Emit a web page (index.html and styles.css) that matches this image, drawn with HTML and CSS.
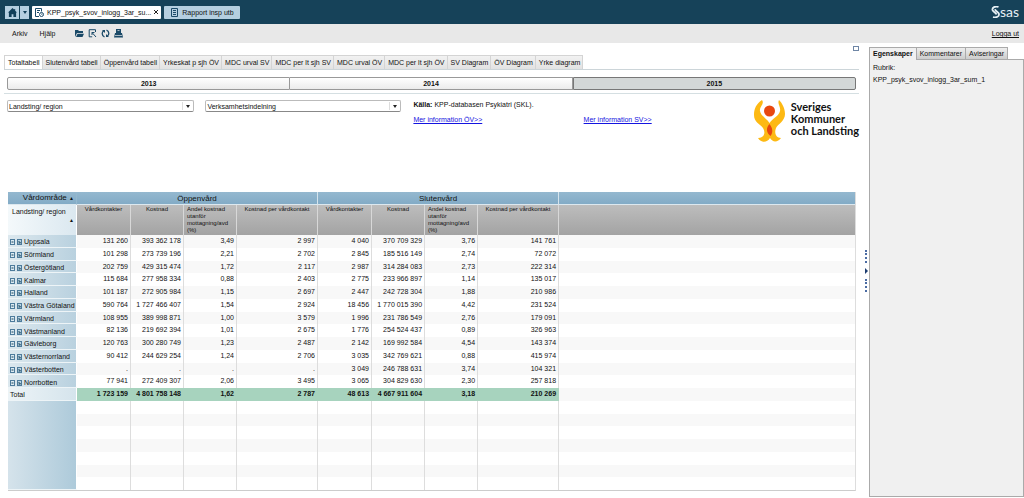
FILE: index.html
```html
<!DOCTYPE html>
<html lang="sv">

<head>
    <meta charset="UTF-8">
    <meta name="viewport" content="width=device-width, initial-scale=1.0">
    <link rel="stylesheet" href="styles.css">
    <title>KPP_psyk_svov_inlogg_3ar_sum_1</title>
</head>

<body>
    <svg class="symbols" aria-hidden="true">
        <symbol id="expand" viewBox="0 0 12 6">
            <rect x="0.5" y="0.5" width="4" height="5" fill="#dcebf3" stroke="#4d7b9b" />
            <path d="M1.5 3h2" stroke="#16425a" />
            <rect x="7.5" y="0.5" width="4" height="5" fill="#b9d3e2" stroke="#4d7b9b" />
            <path d="M8.5 2l2 2M8.5 4h2" stroke="#16425a" />
        </symbol>
    </svg>

    <header class="topbar">
        <div class="home-group">
            <button class="home" aria-label="Hem">
                <svg viewBox="0 0 10 10" width="9" height="9"><path d="M5 0L0 5h1v5h3V7h2v3h3V5h1L8 3V1H7v1z" fill="#123f59" /></svg>
            </button>
            <button class="home-menu" aria-label="Visa meny"><svg viewBox="0 0 4 3" width="4" height="3"><path d="M0 0h4L2 3z" fill="#123f59" /></svg></button>
        </div>
        <div class="doc-tab doc-active">
            <svg viewBox="0 0 9 9" width="9" height="9" fill="none" stroke="#1b4a68"><path d="M4 8.500H.5v-8h6v3M2 2.500h3M2 4.500h2" /><circle cx="6.500" cy="6.500" r="2" /><path d="M6.500 5.500v1h1" stroke-width=".6" /></svg>
            <a href="#">KPP_psyk_svov_inlogg_3ar_su...</a>
            <button class="close" aria-label="Stäng"><svg viewBox="0 0 4 4" width="4" height="4"><path d="M0 0l4 4M4 0L0 4" stroke="#222" /></svg></button>
        </div>
        <div class="doc-tab">
            <svg viewBox="0 0 9 9" width="9" height="9" fill="none" stroke="#1b4a68"><path d="M1.500.5h6v8h-6zM3 2.500h3M3 4.500h3M3 6.500h3" /></svg>
            <a href="#">Rapport insp utb</a>
        </div>
        <div class="sas">
            <svg viewBox="0 0 9 12" width="9" height="12" fill="none" stroke="#e6f0f5" stroke-width="1.800"><path d="M7.500 1C4-.2 1 1.500 1.500 4c.5 2 3.500 2.500 4 4.500M2 11c3.500 1 6.300-.5 6-3-.3-2-3.500-2.500-4-4.800" /></svg>
            <span>sas</span>
        </div>
    </header>

    <nav class="menubar">
        <a href="#">Arkiv</a>
        <a href="#">Hjälp</a>
        <div class="tools">
            <button aria-label="Öppna"><svg viewBox="0 0 9 9" width="9" height="9"><path d="M0 1h3l1 1h4v2H2L0 8zM2.500 4.700H9L7.500 8H1z" fill="#1b4a68" /></svg></button>
            <button aria-label="Redigera"><svg viewBox="0 0 9 9" width="9" height="9"><path d="M7.500 3V.7H1.200v7.100h3M4 3.500l4 4.500M4 6V3.500h2.500" fill="none" stroke="#1b4a68" /></svg></button>
            <button aria-label="Uppdatera"><svg viewBox="0 0 9 9" width="9" height="9"><path d="M3.500 8C.5 6.500.5 3 3 1.500M5.500 1c3 1.500 3 5 .5 6.500" fill="none" stroke="#1b4a68" stroke-width="1.300" /><path d="M1 1h3v3zM8 8H5V5z" fill="#1b4a68" /></svg></button>
            <button aria-label="Skriv ut"><svg viewBox="0 0 9 9" width="9" height="9"><path d="M2 0h5v4H2zM1 4h7l1 4.500H0z" fill="#1b4a68" /><path d="M3.500 1.500h2M1 6.500h7" stroke="#e8e8e8" stroke-width=".7" /></svg></button>
        </div>
        <a class="logout" href="#">Logga ut</a>
    </nav>

    <div class="workspace">
        <main class="report">
            <div class="report-top"><button class="maximize" aria-label="Maximera"></button></div>
            <nav class="tabs">
                <a class="active" href="#">Totaltabell</a>
                <a href="#">Slutenvård tabell</a>
                <a href="#">Öppenvård tabell</a>
                <a href="#">Yrkeskat p sjh ÖV</a>
                <a href="#">MDC urval SV</a>
                <a href="#">MDC per lt sjh SV</a>
                <a href="#">MDC urval ÖV</a>
                <a href="#">MDC per lt sjh ÖV</a>
                <a href="#">SV Diagram</a>
                <a href="#">ÖV Diagram</a>
                <a href="#">Yrke diagram</a>
            </nav>

            <div class="years">
                <button>2013</button>
                <button>2014</button>
                <button class="selected">2015</button>
            </div>

            <section class="filters">
                <div class="select">
                    <select aria-label="Landsting/ region"><option>Landsting/ region</option></select>
                </div>
                <div class="select select-wide">
                    <select aria-label="Verksamhetsindelning"><option>Verksamhetsindelning</option></select>
                </div>
                <div class="source">
                    <p><b>Källa:</b> KPP-databasen Psykiatri (SKL).</p>
                    <div class="links">
                        <a href="#">Mer information ÖV&gt;&gt;</a>
                        <a href="#">Mer information SV&gt;&gt;</a>
                    </div>
                </div>
                <div class="skl">
                    <svg viewBox="0 0 31 42" width="31" height="42">
                        <path d="M8 0C2 4 0 9 0 15c0 7 6 9 9 13 3 5 1 10-5 10 3 5 9 5 12 0 3 5 8 4 11 0-5 0-7-5-5-10 2-4 9-7 9-14 0-6-3-11-6-14-2 4 2 7 1 11-1 5-7 7-10.500 12C12 18 7 16 6 11 5 7 11 4 8 0z" fill="#fdb913" />
                        <circle cx="15.500" cy="11" r="5.500" fill="#e8480f" />
                        <path d="M15.500 24c-4 4-3 9 1 12 3-4 2-8-1-12z" fill="#e8480f" />
                    </svg>
                    <div>Sveriges<br>Kommuner<br>och Landsting</div>
                </div>
            </section>

            <table class="crosstab">
                <colgroup>
                    <col class="c-name">
                    <col class="c-first"><col class="c-num"><col class="c-num"><col class="c-wide">
                    <col class="c-first"><col class="c-num"><col class="c-num"><col class="c-wide">
                    <col>
                </colgroup>
                <thead>
                    <tr class="groups">
                        <th class="area">Vårdområde <span class="sort">▲</span></th>
                        <th colspan="4">Öppenvård</th>
                        <th colspan="4">Slutenvård</th>
                        <th></th>
                    </tr>
                    <tr class="measures">
                        <th class="region">Landsting/ region <span class="sort">▲</span></th>
                        <th>Vårdkontakter</th>
                        <th>Kostnad</th>
                        <th class="share">Andel kostnad utanför mottagning/avd (%)</th>
                        <th>Kostnad per vårdkontakt</th>
                        <th>Vårdkontakter</th>
                        <th>Kostnad</th>
                        <th class="share">Andel kostnad utanför mottagning/avd (%)</th>
                        <th>Kostnad per vårdkontakt</th>
                        <th></th>
                    </tr>
                </thead>
                <tbody>
                    <tr><th><svg class="expand"><use href="#expand" /></svg>Uppsala</th><td>131 260</td><td>393 362 178</td><td>3,49</td><td>2 997</td><td>4 040</td><td>370 709 329</td><td>3,76</td><td>141 761</td><td></td></tr>
                    <tr><th><svg class="expand"><use href="#expand" /></svg>Sörmland</th><td>101 298</td><td>273 739 196</td><td>2,21</td><td>2 702</td><td>2 845</td><td>185 516 149</td><td>2,74</td><td>72 072</td><td></td></tr>
                    <tr><th><svg class="expand"><use href="#expand" /></svg>Östergötland</th><td>202 759</td><td>429 315 474</td><td>1,72</td><td>2 117</td><td>2 987</td><td>314 284 083</td><td>2,73</td><td>222 314</td><td></td></tr>
                    <tr><th><svg class="expand"><use href="#expand" /></svg>Kalmar</th><td>115 684</td><td>277 958 334</td><td>0,88</td><td>2 403</td><td>2 775</td><td>233 966 897</td><td>1,14</td><td>135 017</td><td></td></tr>
                    <tr><th><svg class="expand"><use href="#expand" /></svg>Halland</th><td>101 187</td><td>272 905 984</td><td>1,15</td><td>2 697</td><td>2 447</td><td>242 728 304</td><td>1,88</td><td>210 986</td><td></td></tr>
                    <tr><th><svg class="expand"><use href="#expand" /></svg>Västra Götaland</th><td>590 764</td><td>1 727 466 407</td><td>1,54</td><td>2 924</td><td>18 456</td><td>1 770 015 390</td><td>4,42</td><td>231 524</td><td></td></tr>
                    <tr><th><svg class="expand"><use href="#expand" /></svg>Värmland</th><td>108 955</td><td>389 998 871</td><td>1,00</td><td>3 579</td><td>1 996</td><td>231 786 549</td><td>2,76</td><td>179 091</td><td></td></tr>
                    <tr><th><svg class="expand"><use href="#expand" /></svg>Västmanland</th><td>82 136</td><td>219 692 394</td><td>1,01</td><td>2 675</td><td>1 776</td><td>254 524 437</td><td>0,89</td><td>326 963</td><td></td></tr>
                    <tr><th><svg class="expand"><use href="#expand" /></svg>Gävleborg</th><td>120 763</td><td>300 280 749</td><td>1,23</td><td>2 487</td><td>2 142</td><td>169 992 584</td><td>4,54</td><td>143 374</td><td></td></tr>
                    <tr><th><svg class="expand"><use href="#expand" /></svg>Västernorrland</th><td>90 412</td><td>244 629 254</td><td>1,24</td><td>2 706</td><td>3 035</td><td>342 769 621</td><td>0,88</td><td>415 974</td><td></td></tr>
                    <tr><th><svg class="expand"><use href="#expand" /></svg>Västerbotten</th><td>.</td><td>.</td><td>.</td><td>.</td><td>3 049</td><td>246 788 631</td><td>3,74</td><td>104 321</td><td></td></tr>
                    <tr><th><svg class="expand"><use href="#expand" /></svg>Norrbotten</th><td>77 941</td><td>272 409 307</td><td>2,06</td><td>3 495</td><td>3 065</td><td>304 829 630</td><td>2,30</td><td>257 818</td><td></td></tr>
                    <tr class="total"><th>Total</th><td>1 723 159</td><td>4 801 758 148</td><td>1,62</td><td>2 787</td><td>48 613</td><td>4 667 911 604</td><td>3,18</td><td>210 269</td><td></td></tr>
                    <tr class="empty"><th rowspan="7"></th><td></td><td></td><td></td><td></td><td></td><td></td><td></td><td></td><td></td></tr>
                    <tr class="empty"><td></td><td></td><td></td><td></td><td></td><td></td><td></td><td></td><td></td></tr>
                    <tr class="empty"><td></td><td></td><td></td><td></td><td></td><td></td><td></td><td></td><td></td></tr>
                    <tr class="empty"><td></td><td></td><td></td><td></td><td></td><td></td><td></td><td></td><td></td></tr>
                    <tr class="empty"><td></td><td></td><td></td><td></td><td></td><td></td><td></td><td></td><td></td></tr>
                    <tr class="empty"><td></td><td></td><td></td><td></td><td></td><td></td><td></td><td></td><td></td></tr>
                    <tr class="empty"><td></td><td></td><td></td><td></td><td></td><td></td><td></td><td></td><td></td></tr>
                </tbody>
            </table>
        </main>

        <div class="splitter">
            <span class="dots"></span>
            <button aria-label="Dölj panel"><svg viewBox="0 0 3 6" width="3" height="6"><path d="M0 0l3 3-3 3z" fill="#1c3c70" /></svg></button>
            <span class="dots"></span>
        </div>

        <aside class="panel">
            <nav class="panel-tabs">
                <a class="active" href="#">Egenskaper</a>
                <a href="#">Kommentarer</a>
                <a href="#">Aviseringar</a>
            </nav>
            <div class="panel-body">
                <p>Rubrik:</p>
                <p>KPP_psyk_svov_inlogg_3ar_sum_1</p>
            </div>
        </aside>
    </div>
</body>

</html>
```

FILE: styles.css
```css
* {
    box-sizing: border-box;
}

body {
    margin: 0;
    min-height: 100vh;
    display: flex;
    flex-direction: column;
    font-family: "Liberation Sans", Arial, sans-serif;
    font-size: 7px;
    line-height: 9px;
    color: #111;
    background: #fff;
}

a {
    color: inherit;
    text-decoration: none;
}

p {
    margin: 0;
}

button {
    font: inherit;
    color: inherit;
    padding: 0;
    margin: 0;
    border: none;
    background: none;
    cursor: pointer;
    display: flex;
    align-items: center;
    justify-content: center;
}

svg {
    display: block;
    flex: none;
}

.symbols {
    display: none;
}

/* top bar */
.topbar {
    display: flex;
    align-items: center;
    height: 24px;
    padding: 0 5px;
    background: #164259;
}

.home-group {
    display: flex;
    gap: 1px;
    margin-right: 3px;
}

.home,
.home-menu {
    height: 13px;
    background: #b5cfe0;
}

.home {
    width: 14px;
}

.home-menu {
    width: 9px;
}

.doc-tab {
    display: flex;
    align-items: center;
    gap: 3px;
    height: 13px;
    padding: 0 6px;
    margin-right: 3px;
    border-radius: 1px;
    background: #b5cfe0;
}

.doc-active {
    padding: 0 3px;
    background: #fff;
}

.close {
    width: 4px;
    height: 8px;
}

.sas {
    display: flex;
    align-items: center;
    margin-left: auto;
    color: #e6f0f5;
    font-family: Lato, sans-serif;
    font-size: 14px;
    line-height: 14px;
}

/* menu */
.menubar {
    display: flex;
    align-items: center;
    gap: 12px;
    height: 19px;
    padding: 0 5px 0 12px;
    background: #e8e8e8;
}

.tools {
    display: flex;
    gap: 4px;
    margin-left: 7px;
}

.logout {
    margin-left: auto;
    text-decoration: underline;
}

/* layout */
.workspace {
    flex: 1;
    display: flex;
}

.report {
    flex: 1;
    display: flex;
    flex-direction: column;
    padding: 0 3px 7px 4px;
}

.report-top {
    display: flex;
    justify-content: flex-end;
    height: 12px;
    padding: 3px 0 0;
}

.maximize {
    width: 6px;
    height: 5px;
    border: 1px solid #6f86a5;
}

.tabs {
    display: flex;
    border-bottom: 1px solid #ccd5d9;
}

.tabs a {
    padding: 2px 2px 2px 3px;
    border: 1px solid #d4d4d4;
    border-left: none;
    border-bottom: none;
    background: linear-gradient(#f2f2f2, #e2e2e2);
}

.tabs .active {
    border-left: 1px solid #d4d4d4;
    background: #fff;
}

.years {
    display: flex;
    padding: 7px 3px 3px;
    border-bottom: 1px solid #d5dfe2;
}

.years button {
    flex: 1;
    height: 13px;
    border: 1px solid #999;
    border-left-width: 0;
    font-weight: bold;
    background: linear-gradient(#fff, #ececec);
}

.years button:first-child {
    border-left-width: 1px;
    border-radius: 2px 0 0 2px;
}

.years .selected {
    border: 1px solid #777;
    border-radius: 0 2px 2px 0;
    background: #d3d7d7;
}

/* filters */
.filters {
    display: flex;
    align-items: flex-start;
    height: 98px;
    padding: 6px 0 0 3px;
}

.select {
    position: relative;
    width: 22%;
    margin-right: 11px;
}

.select-wide {
    width: 23%;
}

.select select {
    display: block;
    width: 100%;
    height: 12px;
    padding: 0 1px;
    appearance: none;
    font: inherit;
    color: inherit;
    border: 1px solid #bbb;
    border-bottom-color: #888;
    border-radius: 2px;
    background: #fff;
}

.select::after {
    content: "";
    position: absolute;
    right: 4px;
    top: 5px;
    border: 2px solid transparent;
    border-top: 3px solid #222;
    border-bottom: none;
}

.select::before {
    content: "";
    position: absolute;
    right: 11px;
    top: 2px;
    height: 8px;
    border-left: 1px solid #ddd;
}

.source {
    flex: 1;
    display: flex;
    flex-direction: column;
    gap: 6px;
    padding-left: 1px;
}

.links {
    display: flex;
}

.links a {
    width: 51%;
    color: #1414e0;
    text-decoration: underline;
}

.skl {
    display: flex;
    gap: 6px;
    font-family: Lato, sans-serif;
    font-size: 11px;
    font-weight: bold;
    line-height: 12px;
    color: #111;
    white-space: nowrap;
}

.skl div {
    padding-top: 1px;
}

/* table */
.crosstab {
    flex: 1;
    width: calc(100% - 7px);
    margin: 0 3px 0 4px;
    table-layout: fixed;
    border-collapse: separate;
    border-spacing: 0;
    border-right: 1px solid #ddd;
    border-bottom: 1px solid #ccc;
}

.c-name {
    width: 69px;
}

.c-first {
    width: 54px;
}

.c-num {
    width: 53px;
}

.c-wide {
    width: 81px;
}

.crosstab th,
.crosstab td {
    padding: 1px 2px;
    font-weight: normal;
}

.groups th {
    height: 13px;
    font-size: 8px;
    background: linear-gradient(#94b8cf, #82abc6);
    border-right: 1px solid #d5e4ed;
    border-bottom: 1px solid #dce8ef;
}

.groups .area {
    text-align: right;
    border-right-color: #94b8cf;
}

.measures th {
    height: 30px;
    padding: 1px 3px 0;
    font-size: 6px;
    line-height: 7px;
    vertical-align: top;
    background: linear-gradient(#bdbdbd, #a3a3a3);
    border-right: 1px solid #d8d8d8;
}

.measures .share {
    text-align: left;
}

.measures .region {
    padding: 2px 2px 2px 4px;
    font-size: 7px;
    line-height: 9px;
    text-align: left;
    background: linear-gradient(90deg, #f4f9fb, #dbe8f0);
    border-right: 1px solid #fff;
}

.sort {
    font-size: 5px;
}

.region .sort {
    display: block;
    text-align: right;
}

.crosstab tbody td {
    text-align: right;
    vertical-align: top;
    border-right: 1px solid #ddd;
}

.crosstab tbody td:last-child,
.crosstab thead th:last-child {
    border-right: none;
}

.crosstab tbody tr:nth-child(odd) {
    background: #f8f8f8;
}

.crosstab tbody th {
    padding: 2px 2px 0;
    text-align: left;
    white-space: nowrap;
    background: linear-gradient(90deg, #dce8ee, #b9d1df);
    border-bottom: 1px solid #edf4f7;
    border-right: 1px solid #fff;
}

.expand {
    display: inline-block;
    width: 12px;
    height: 6px;
    margin-right: 2px;
    vertical-align: -1px;
}

.crosstab .total td {
    font-weight: bold;
    background: #a7d3be;
    border-right-color: #a7d3be;
}

.crosstab .total td:last-child {
    background: none;
}

.crosstab .total th {
    background: linear-gradient(90deg, #edf4f7, #d5e4ec);
}

.crosstab .empty td {
    padding: 6px 0;
}

.crosstab .empty th {
    background: linear-gradient(90deg, #d5e3eb, #adcada);
}

/* splitter */
.splitter {
    display: flex;
    flex-direction: column;
    align-items: center;
    justify-content: center;
    gap: 5px;
    width: 7px;
    padding-left: 1px;
}

.dots {
    height: 13px;
    border-left: 2px dotted #4a6ba3;
}

/* side panel */
.panel {
    display: flex;
    flex-direction: column;
    width: 155px;
    padding: 4px 0 1px;
}

.panel-tabs {
    display: flex;
}

.panel-tabs a {
    height: 13px;
    padding: 1px 3px;
    border: 1px solid #aaa;
    border-left: none;
    border-bottom: none;
    background: linear-gradient(#eee, #ccc);
}

.panel-tabs .active {
    border-left: 1px solid #aaa;
    font-weight: bold;
    background: #f0f0f0;
}

/* top line of the body runs under every tab but the active one */
.panel-tabs a:not(.active) {
    border-bottom: 1px solid #aaa;
}

.panel-tabs::after {
    content: "";
    flex: 1;
    border-bottom: 1px solid #aaa;
}

.panel-body {
    flex: 1;
    display: flex;
    flex-direction: column;
    gap: 3px;
    padding: 3px;
    border: 1px solid #aaa;
    border-top: none;
    background: #f0f0f0;
}
```
